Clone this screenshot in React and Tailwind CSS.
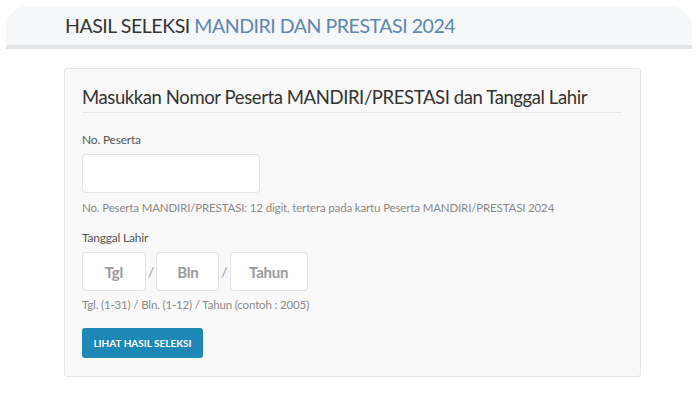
const font = { fontFamily: "Lato, 'Open Sans', sans-serif" };

function DateBox({ placeholder, width }) {
  return (
    <input
      type="text"
      placeholder={placeholder}
      className={`${width} h-[39px] rounded-[4px] border border-[#e3e3e3] bg-white text-center text-[15px] font-bold tracking-[-0.2px] text-[#555] placeholder:text-[#9a9a9a] outline-none`}
    />
  );
}

const App = () => {
  return (
    <div className="min-h-[393px] w-[700px] bg-white pt-[6px]" style={font}>
      <div className="ml-[6px] mr-[8px] h-[43px] rounded-t-[22px] border-b-[4px] border-[#e3e4e5] bg-[#f6f7f8] pl-[59px] pt-[8px]">
        <h1 className="text-[19.5px] leading-[24px] tracking-[-0.45px] text-[#333]">
          HASIL SELEKSI <span className="text-[#5d87b0]">MANDIRI DAN PRESTASI 2024</span>
        </h1>
      </div>

      <div className="ml-[64px] mt-[19px] w-[577px] rounded-[3px] border border-[#e5e5e5] bg-[#f9f9f9] pl-[17px] pr-[18px] pt-[15px] pb-[18px]">
        <h2 className="whitespace-nowrap border-b border-[#e6e6e6] pb-[2px] text-[18.5px] leading-[26px] tracking-[-0.4px] text-[#333]">
          Masukkan Nomor Peserta MANDIRI/PRESTASI dan Tanggal Lahir
        </h2>

        <div className="mt-[19px] text-[12px] leading-[16px] tracking-[-0.2px] text-[#555]">No. Peserta</div>
        <input
          type="text"
          className="mt-[6px] block h-[39px] w-[178px] rounded-[4px] border border-[#e3e3e3] bg-white outline-none"
        />
        <p className="mt-[7px] text-[11.5px] leading-[16px] tracking-[-0.15px] text-[#8a8a8a]">
          No. Peserta MANDIRI/PRESTASI: 12 digit, tertera pada kartu Peserta MANDIRI/PRESTASI 2024
        </p>

        <div className="mt-[14px] text-[12px] leading-[16px] tracking-[-0.2px] text-[#555]">Tanggal Lahir</div>
        <div className="mt-[6px] flex items-center">
          <DateBox placeholder="Tgl" width="w-[64px]" />
          <span className="mx-[2px] text-[14px] text-[#999]">/</span>
          <DateBox placeholder="Bln" width="w-[63px]" />
          <span className="mx-[2px] text-[14px] text-[#999]">/</span>
          <DateBox placeholder="Tahun" width="w-[78px]" />
        </div>
        <p className="mt-[6px] text-[11.5px] leading-[16px] tracking-[-0.15px] text-[#8a8a8a]">
          Tgl. (1-31) / Bln. (1-12) / Tahun (contoh : 2005)
        </p>

        <button className="mt-[15px] block h-[30px] w-[121px] rounded-[3px] bg-[#1d87b6] text-[10px] font-bold text-white">
          LIHAT HASIL SELEKSI
        </button>
      </div>
    </div>
  );
};

export default App;
